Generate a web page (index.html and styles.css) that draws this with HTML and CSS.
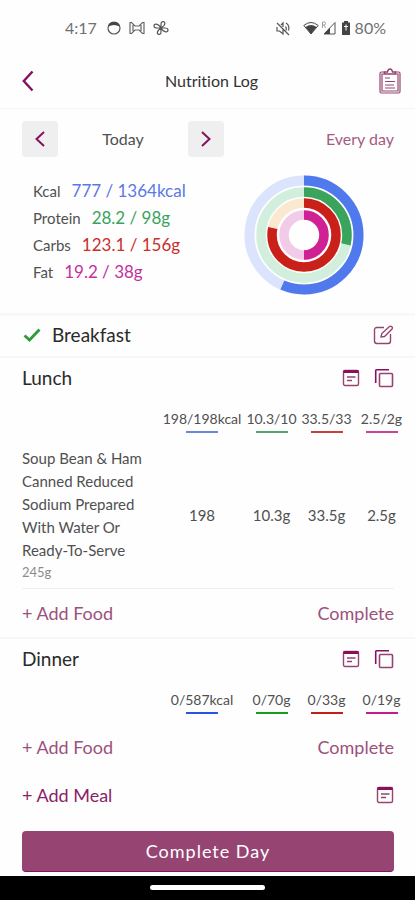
FILE: index.html
```html
<!DOCTYPE html>
<html lang="en">
<head>
<meta charset="utf-8">
<meta name="viewport" content="width=device-width, initial-scale=1">
<title>Nutrition Log</title>
<link rel="stylesheet" href="styles.css">
</head>
<body>
<svg class="defs" aria-hidden="true">
  <symbol id="note" viewBox="0 0 18 18"><rect x="1.500" y="1.500" width="15" height="15" rx="1.500" fill="none" stroke="currentColor" stroke-width="1.400"/><path d="M1.500 2.500h15" stroke="#85115f" stroke-width="3"/><path d="M5 8h8.500M5 11.500h5" fill="none" stroke="currentColor" stroke-width="1.600"/></symbol>
  <symbol id="copy" viewBox="0 0 20 20"><path d="M1.700 15V2.500q0-.8.8-.8H15" fill="none" stroke="#85115f" stroke-width="1.600"/><rect x="5.500" y="5.500" width="13" height="13" rx="1" fill="none" stroke="currentColor" stroke-width="1.600"/></symbol>
</svg>
<div class="app">
  <div class="status">
    <span class="time">4:17</span>
    <svg width="14" height="14" viewBox="0 0 14 14"><circle cx="7" cy="7" r="6" fill="none" stroke="#555" stroke-width="1.200"/><path d="M1.500 5.500Q2.500 1 7 1t5.500 4.500Q10 4 7 4T1.500 5.500z" fill="#444"/></svg>
    <svg width="16" height="14" viewBox="0 0 16 14" fill="none" stroke="#666" stroke-width="1.200"><path d="M1 1.500h1.500L6 5h4l3.500-3.500H15v11h-1.500L10 9H6l-3.500 3.500H1zM4 4v6M12 4v6"/></svg>
    <svg width="16" height="14" viewBox="0 0 16 14" fill="none" stroke="#555" stroke-width="1.200"><path d="M8 7V3q0-2.300 2-2.300t1.800 2.100Q11.500 5 8 7h4q3 0 3 2t-2.300 1.800Q10 10.500 8 7v4q0 2.500-2 2.300T4.500 11Q5 9 8 7H4Q1 7 1 5t2.300-1.800Q6 3.500 8 7z"/></svg>
    <span class="grow"></span>
    <svg class="mute" width="16" height="15" viewBox="0 0 16 15" fill="none" stroke="#555" stroke-width="1.200"><path d="M2 2l12 12M2 6v4h2.500L8 13V8M6 4l2-2v4M10.500 5.500q1.500 1.500.5 4M11 2q4 2.500 2.500 7.500"/></svg>
    <svg width="16" height="14" viewBox="0 0 16 14"><path d="M.8 4.500Q8-1.500 15.200 4.500L8 13z" fill="none" stroke="#444"/><path d="M2.500 6q5.500-4 11 0L8 13z" fill="#444"/></svg>
    <svg width="15" height="14" viewBox="0 0 15 14"><path d="M14 1.500V13H3z" fill="none" stroke="#555"/><path d="M9 6.500V13H3z" fill="#444"/><path d="M1.500 7V1h1.700q1.300 0 1.300 1.500T3.200 4H1.500m1.600 0l1.500 3" fill="none" stroke="#888" stroke-width=".8"/></svg>
    <svg class="battery" width="10" height="14" viewBox="0 0 10 14"><path d="M3 0h4v1.500h2V14H1V1.500h2z" fill="#444"/><path d="M5 3.500v6M3 5.500h4" stroke="#fff"/></svg>
    <span class="percent">80%</span>
  </div>

  <header class="header">
    <button class="icon" aria-label="Back"><svg width="12" height="22" viewBox="0 0 12 22"><path d="M10.500 1.500L1.800 11l8.700 9.500" fill="none" stroke="#85115f" stroke-width="2.400"/></svg></button>
    <h1>Nutrition Log</h1>
    <button class="icon" aria-label="Clipboard"><svg width="22" height="26" viewBox="0 0 22 26" fill="none" stroke="#96446f" stroke-width="1.200"><path d="M6 4H2.500Q1 4 1 5.500v18Q1 25 2.500 25h17q1.500 0 1.500-1.500v-18Q21 4 19.500 4H16M5 6H3v17h16V6h-2"/><path d="M5.500 6V4h3q.5-3 2.500-3t2.500 3h3v2z" stroke-width="1.500"/><path d="M6 10h5M6 13.500h10M6 17h9M6 20h10"/></svg></button>
  </header>

  <nav class="days">
    <button class="step" aria-label="Previous day"><svg width="12" height="16" viewBox="0 0 12 16"><path d="M10 1L2.500 8l7.500 7" fill="none" stroke="#85115f" stroke-width="2"/></svg></button>
    <span class="today">Today</span>
    <button class="step" aria-label="Next day"><svg width="12" height="16" viewBox="0 0 12 16"><path d="M2 1l7.500 7L2 15" fill="none" stroke="#85115f" stroke-width="2"/></svg></button>
    <a class="every" href="#">Every day</a>
  </nav>

  <section class="summary">
    <dl class="stats">
      <div><dt>Kcal</dt><dd class="blue">777 / 1364kcal</dd></div>
      <div><dt>Protein</dt><dd class="green">28.2 / 98g</dd></div>
      <div><dt>Carbs</dt><dd class="red">123.1 / 156g</dd></div>
      <div><dt>Fat</dt><dd class="pink">19.2 / 38g</dd></div>
    </dl>
    <svg class="rings" width="120" height="120" viewBox="-60 -60 120 120" fill="none" role="img" aria-label="Daily progress">
      <g stroke-width="10"><circle r="54.500" stroke="#dce3fc"/><circle r="43" stroke="#d2eedd" stroke-width="9.500"/><circle r="32" stroke="#fae9cf" stroke-width="9.500"/><circle r="20" stroke="#f1cbe8" stroke-width="9.500"/></g>
      <g transform="rotate(-90)" stroke-width="9.500">
        <circle r="54.500" stroke="#5179ee" stroke-width="10" pathLength="100" stroke-dasharray="56.500 100"/>
        <circle r="43" stroke="#3aa35c" pathLength="100" stroke-dasharray="28.500 100"/>
        <circle r="32" stroke="#c9211a" pathLength="100" stroke-dasharray="78.500 100"/>
        <circle r="20" stroke="#cf2094" pathLength="100" stroke-dasharray="50 100"/>
      </g>
    </svg>
  </section>

  <section class="meal done">
    <svg width="18" height="14" viewBox="0 0 18 14"><path d="M1.500 7.500l5 4.500L16.500 1.500" fill="none" stroke="#2e9b3a" stroke-width="2.800"/></svg>
    <h2>Breakfast</h2>
    <button class="icon" aria-label="Edit breakfast"><svg width="21" height="20" viewBox="0 0 21 20" fill="none" stroke="#96446f" stroke-width="1.400"><path d="M11 2.500H4q-2.500 0-2.500 2.500v11Q1.500 18.500 4 18.500h11q2.500 0 2.500-2.500V9"/><path d="M8 12l.8-3.500L16.500 1.500q1.200-.8 2.300.2t.2 2.300L11.500 11.500z"/></svg></button>
  </section>

  <section class="meal">
    <div class="title"><h2>Lunch</h2>
      <button class="icon" aria-label="Lunch notes"><svg width="18" height="18"><use href="#note"/></svg></button>
      <button class="icon" aria-label="Copy lunch"><svg width="20" height="20"><use href="#copy"/></svg></button></div>
    <table>
      <thead><tr><td class="name"></td><th class="kcal blue-bar">198/198kcal</th><th class="green-bar">10.3/10</th><th class="red-bar">33.5/33</th><th class="pink-bar">2.5/2g</th></tr></thead>
      <tbody><tr><td class="name">Soup Bean &amp; Ham Canned Reduced Sodium Prepared With Water Or<br>Ready-To-Serve<small>245g</small></td><td>198</td><td>10.3g</td><td>33.5g</td><td>2.5g</td></tr></tbody>
    </table>
    <div class="actions ruled"><button class="link">+ Add Food</button><button class="link">Complete</button></div>
  </section>

  <section class="meal last">
    <div class="title"><h2>Dinner</h2>
      <button class="icon" aria-label="Dinner notes"><svg width="18" height="18"><use href="#note"/></svg></button>
      <button class="icon" aria-label="Copy dinner"><svg width="20" height="20"><use href="#copy"/></svg></button></div>
    <table class="vivid">
      <thead><tr><td class="name"></td><th class="kcal blue-bar">0/587kcal</th><th class="green-bar">0/70g</th><th class="red-bar">0/33g</th><th class="pink-bar">0/19g</th></tr></thead>
    </table>
    <div class="actions"><button class="link">+ Add Food</button><button class="link">Complete</button></div>
  </section>

  <div class="actions"><button class="link strong">+ Add Meal</button><button class="icon" aria-label="Meal notes"><svg width="18" height="18"><use href="#note"/></svg></button></div>
  <div class="finish"><button class="primary">Complete Day</button></div>
  <footer class="gesture"><span></span></footer>
</div>
</body>
</html>
```
FILE: styles.css
```css
* { box-sizing: border-box; margin: 0; padding: 0; }
body { background: #fefefe; color: #505050; font: 16px/24px Lato, "Open Sans", sans-serif; font-variant-ligatures: none; }
button { background: none; border: 0; font: inherit; color: inherit; }
svg { display: block; flex: none; }
.defs { position: absolute; width: 0; height: 0; }
.app { min-height: 100vh; display: flex; flex-direction: column; }
.grow { flex: 1; }

.status { height: 56px; padding: 0 29px 0 65px; display: flex; align-items: center; gap: 8px; color: #707070; }
.status .time { margin-right: 2px; }
.status .mute { margin-right: 4px; }
.status .percent { margin-left: -4px; }
.status svg + svg.battery { margin-left: -3px; }
.status .mute + svg + svg { margin-left: -6px; }

.header { height: 53px; padding: 0 14px 2px 22px; display: grid; grid-template-columns: 22px 1fr 22px; align-items: center; border-bottom: 1px solid #f5f5f5; }
.header h1 { font-size: 16px; font-weight: 400; text-align: center; color: #333; }
.icon { color: #96446f; display: flex; align-items: center; }

.days { padding: 12px 21px 0 22px; display: flex; align-items: center; }
.step { width: 36px; height: 36px; border-radius: 4px; background: #efefef; display: flex; align-items: center; justify-content: center; }
.today { width: 130px; text-align: center; }
.every { margin-left: auto; color: #a45c84; text-decoration: none; }

.summary { padding: 18px 51px 18px 33px; display: flex; justify-content: space-between; border-bottom: 3px solid #f8f8f8; }
.stats { padding-top: 4px; }
.stats div { display: flex; gap: 11px; height: 27px; align-items: baseline; }
.stats dt { font-size: 15px; }
.stats dd { font-size: 17px; }
.blue { color: #5b78e8; }
.green { color: #3aa35c; }
.red { color: #c9302c; }
.pink { color: #c4309c; }

.meal { border-bottom: 2px solid #f7f7f7; }
.meal.last { border-bottom: 0; }
h2 { font-size: 19px; font-weight: 400; line-height: 24px; color: #2a2a2a; flex: 1; }
.done { height: 42px; padding: 0 21px 3px 23px; display: flex; align-items: center; gap: 11px; }
.title { height: 41px; padding: 0 21px 1px 22px; display: flex; align-items: center; gap: 14px; }

table { width: 100%; border-collapse: collapse; table-layout: fixed; font-size: 15px; }
td, th { width: 55px; text-align: center; font-weight: 400; white-space: nowrap; }
td:last-child, th:last-child { width: 61px; padding-right: 6px; }
th.kcal { width: 84px; }
th { font-size: 14px; line-height: 24px; padding-top: 8px; }
th::after { content: ""; display: block; width: 32px; height: 2px; margin: 0 auto; background: var(--bar); }
.blue-bar { --bar: #6c86dc; }
.green-bar { --bar: #4fa868; }
.red-bar { --bar: #c5413b; }
.pink-bar { --bar: #cb4399; }
.vivid .blue-bar { --bar: #2456e0; }
.vivid .green-bar { --bar: #179c1e; }
.vivid .red-bar { --bar: #bf1f17; }
.vivid .pink-bar { --bar: #c41d88; }
td.name { width: auto; padding-left: 22px; text-align: left; line-height: 23px; white-space: normal; }
tbody td { padding-top: 14px; padding-bottom: 6px; }
small { display: block; font-size: 13px; line-height: 20px; color: #8c8c8c; }

.actions { height: 48px; margin: 0 21px 0 22px; display: flex; align-items: center; justify-content: space-between; }
.ruled { height: 49px; border-top: 1px solid #f0f0f0; }
.last .actions { margin-top: 9px; }
.link { color: #9d507b; font-size: 18px; }
.strong { color: #8a1f65; }
.finish { padding: 12px 21px 4px 22px; }
.primary { width: 100%; height: 41px; border-radius: 4px; background: #964573; color: #fff; font-size: 18px; letter-spacing: 1px; border-bottom: 1px solid #85115f; }
.gesture { flex: 1; min-height: 24px; background: #000; display: flex; justify-content: center; padding-top: 9px; }
.gesture span { width: 115px; height: 5px; border-radius: 3px; background: #fff; }
```
